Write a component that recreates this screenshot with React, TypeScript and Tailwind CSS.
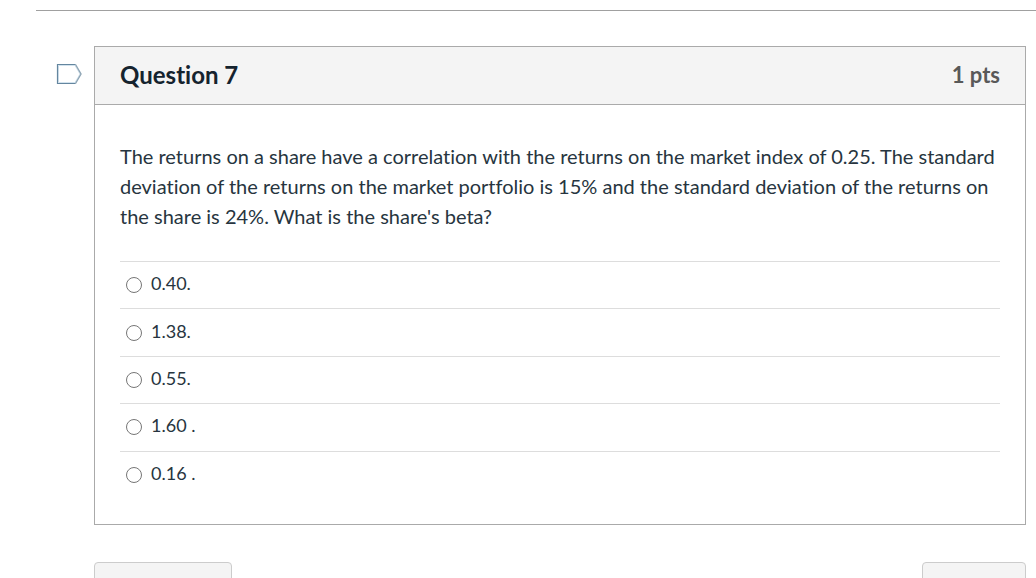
import { useState } from 'react'

const answers = ['0.40.', '1.38.', '0.55.', '1.60 .', '0.16 .']

function FlagButton() {
  return (
    <button type="button" aria-label="Flag question" className="mt-[17px] h-[22px] w-[26px] shrink-0">
      <svg width="26" height="22" viewBox="0 0 26 22" fill="none">
        <path d="M1.5 1.5H19.5L25 11L19.5 20.5H1.5Z" fill="#fff" />
        <path d="M2.5 19.5V2.5H19L24 11L19 19.5H2.5" stroke="#d3e3ee" />
        <path d="M19.5 1.5L25 11L19.5 20.5" stroke="#8ea5b5" strokeWidth="1.4" />
        <path d="M19.5 1.5H1.5V20.5H19.5" stroke="#64869f" strokeWidth="1.2" />
      </svg>
    </button>
  )
}

export default function App() {
  const [selected, setSelected] = useState<string | null>(null)

  return (
    <main className="h-screen overflow-hidden bg-white pt-2.5 pl-9 font-['Lato',sans-serif] text-[#273540] [font-variant-ligatures:none]">
      <hr className="border-t border-[#a0a0a0]" />

      <div className="mt-[35px] mr-2.5 ml-5 flex items-start gap-3">
        <FlagButton />

        <section className="min-w-0 flex-1 border border-[#aaaaaa]">
          <header className="flex h-[58px] items-center justify-between border-b border-[#aaaaaa] bg-[#f4f4f4] px-[25px] pb-0.5">
            <h2 className="text-2xl font-bold text-[#15232e]">Question 7</h2>
            <span className="text-[22px] font-bold text-[#595959]">1 pts</span>
          </header>

          <div className="px-[25px] pt-9 pb-[26px]">
            <p id="question-text" className="text-xl leading-[30px]">
              The returns on a share have a correlation with the returns on the market index of 0.25. The
              standard deviation of the returns on the market portfolio is 15% and the standard deviation of
              the returns on the share is 24%. What is the share's beta?
            </p>

            <div
              role="radiogroup"
              aria-labelledby="question-text"
              className="mt-[30px] grid h-[237px] auto-rows-fr"
            >
              {answers.map(answer => (
                <label key={answer} className="flex items-center gap-[9px] border-t border-[#dddddd] pl-1.5">
                  <input
                    type="radio"
                    name="question-7"
                    value={answer}
                    checked={selected === answer}
                    onChange={() => setSelected(answer)}
                    className="size-4"
                  />
                  <span className="pb-1 text-lg">{answer}</span>
                </label>
              ))}
            </div>
          </div>
        </section>
      </div>

      <nav className="mt-[37px] mr-2.5 ml-[58px] flex justify-between">
        <button
          type="button"
          aria-label="Previous"
          className="h-[50px] w-[138px] rounded border border-[#cccccc] bg-[#f4f4f4]"
        />
        <button
          type="button"
          aria-label="Next"
          className="h-[50px] w-[104px] rounded border border-[#cccccc] bg-[#f4f4f4]"
        />
      </nav>
    </main>
  )
}
